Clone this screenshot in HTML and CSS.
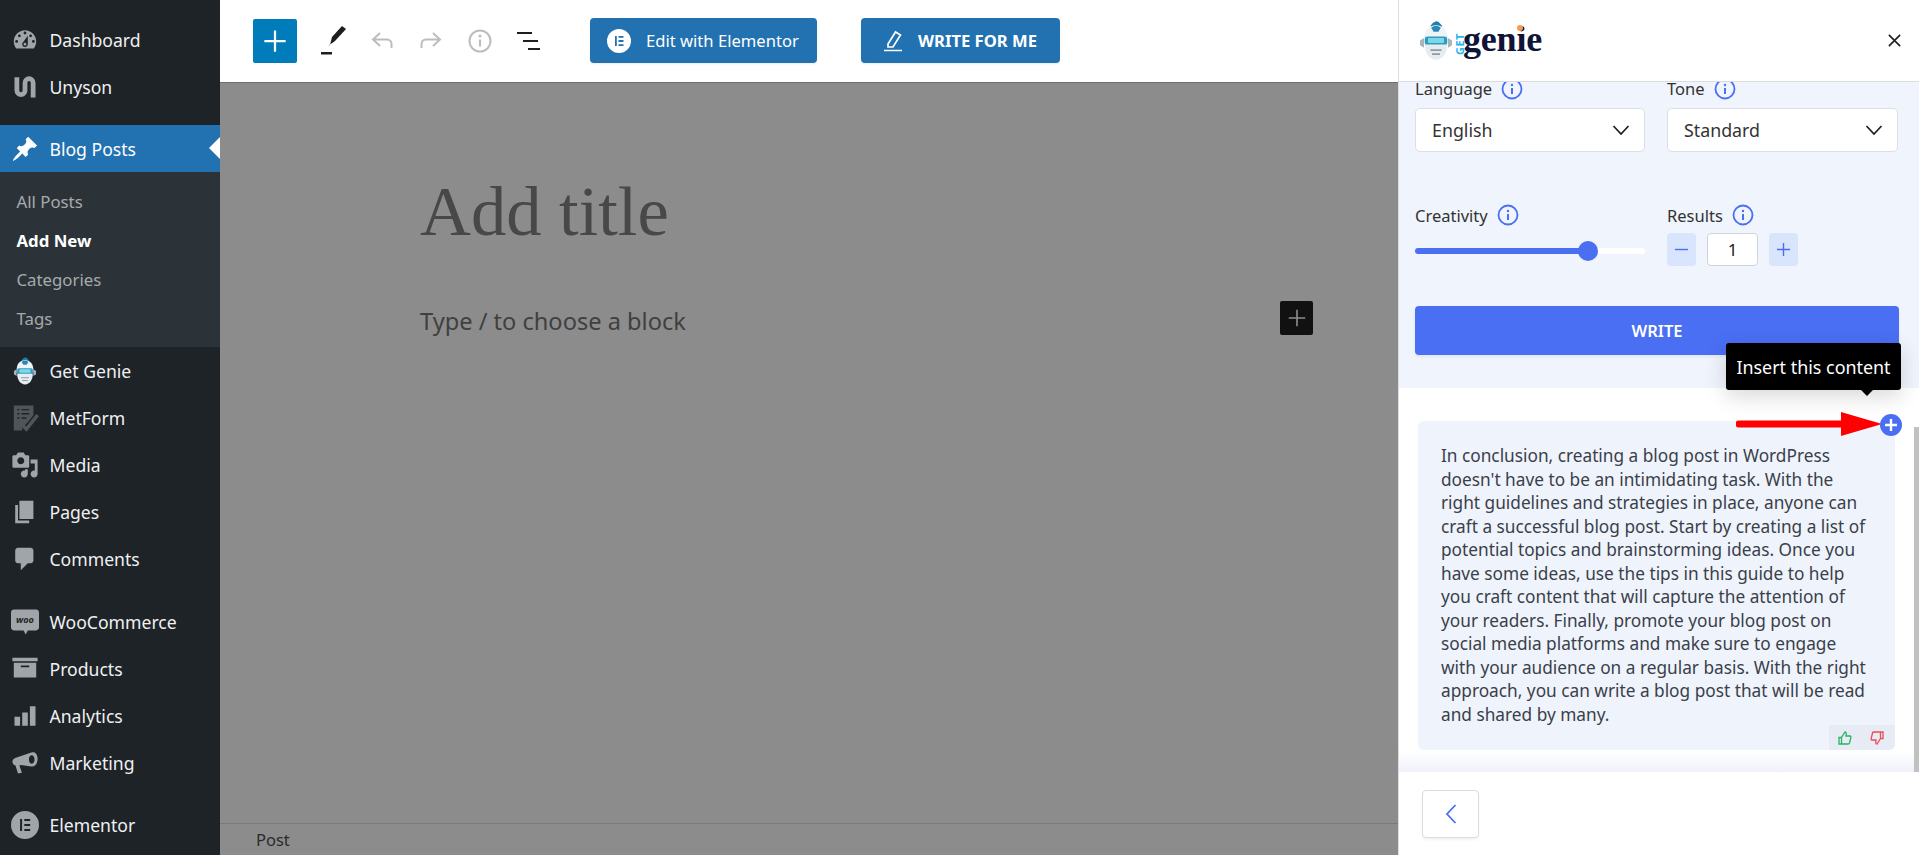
FILE: index.html
```html
<!DOCTYPE html>
<html lang="en">
<head>
<meta charset="utf-8">
<title>Add New Post</title>
<link rel="stylesheet" href="styles.css">
</head>
<body>
<svg class="defs" width="0" height="0" aria-hidden="true">
  <defs>
    <symbol id="robot" viewBox="0 0 40 50">
      <path d="M20 1l3 .5 5 5.500-3 3H15l-2-3 3-4z" fill="#1d7fb0"/>
      <path d="M5 24C5 12 11 6 20 6s15 6 15 18v4H5z" fill="#eef3f6"/>
      <path d="M14 9c3-3 9-3 12 0l-3 5h-6z" fill="#2a88b8"/>
      <path d="M0 25l5-3v12l-5-3z M40 25l-5-3v12l5-3z" fill="#a9b4bc"/>
      <rect x="6" y="20" width="28" height="11" rx="3" fill="#2f9dbf"/>
      <rect x="10" y="22" width="20" height="6" rx="1" fill="#7fd6e6"/>
      <path d="M6 30h28c0 11-6 19-14 19S6 41 6 30z" fill="#e6ecef"/>
      <path d="M13 37h14M15 42h10" stroke="#8e9ca6" stroke-width="2" fill="none"/>
    </symbol>
  </defs>
</svg>
<div class="app">
  <nav class="sidebar">
    <div class="group">
      <a class="item"><svg class="ico" viewBox="0 0 20 20"><path d="M3.76 16h12.48c1.1-1.37 1.76-3.11 1.76-5 0-4.42-3.58-8-8-8s-8 3.58-8 8c0 1.89.66 3.63 1.76 5zM10 4c.55 0 1 .45 1 1s-.45 1-1 1-1-.45-1-1 .45-1 1-1zM6 6c.55 0 1 .45 1 1s-.45 1-1 1-1-.45-1-1 .45-1 1-1zm8 0c.55 0 1 .45 1 1s-.45 1-1 1-1-.45-1-1 .45-1 1-1zm-5.37 5.55L12 7v6c0 1.1-.9 2-2 2s-2-.9-2-2c0-.57.24-1.08.63-1.45zM4 10c.55 0 1 .45 1 1s-.45 1-1 1-1-.45-1-1 .45-1 1-1zm12 0c.55 0 1 .45 1 1s-.45 1-1 1-1-.45-1-1 .45-1 1-1zm-5 3c0-.55-.45-1-1-1s-1 .45-1 1 .45 1 1 1 1-.45 1-1z" fill-rule="evenodd"/></svg>Dashboard</a>
      <a class="item"><svg class="ico" viewBox="0 0 20 20"><path d="M4.200 3v9.500a2.900 2.900 0 0 0 5.800 0V7a2.900 2.900 0 0 1 5.800 0v10.500" fill="none" stroke="#a0a5aa" stroke-width="3.400"/></svg>Unyson</a>
    </div>
    <div class="group">
      <a class="item active"><svg class="ico" viewBox="0 0 20 20"><path d="M10.44 3.02l1.82-1.82 6.36 6.35-1.83 1.82c-1.05-.68-2.48-.57-3.41.36l-.75.75c-.92.93-1.04 2.35-.35 3.41l-1.83 1.82-2.41-2.41-2.8 2.79c-.42.42-3.38 2.71-3.8 2.29s1.86-3.39 2.28-3.81l2.79-2.79L4.1 9.36l1.83-1.82c1.05.69 2.48.57 3.4-.36l.75-.75c.93-.92 1.05-2.35.36-3.41z"/></svg>Blog Posts</a>
      <div class="submenu">
        <a class="sub">All Posts</a>
        <a class="sub current">Add New</a>
        <a class="sub">Categories</a>
        <a class="sub">Tags</a>
      </div>
      <a class="item"><svg class="ico" viewBox="0 0 40 50"><use href="#robot"/></svg>Get Genie</a>
      <a class="item"><svg class="ico" viewBox="0 0 20 20"><path d="M2 1h14v7l-4 5-3 3-1 .5V19H2z" fill="#50555a"/><path d="M8 15l3 3 8-10" fill="none" stroke="#50555a" stroke-width="2.500"/><path d="M4.500 4h1.500M7.500 4H13M4.500 7h1.500M7.500 7H13M4.500 10h1.500M7.500 10H11" stroke="#1d2327" stroke-width="1"/></svg>MetForm</a>
      <a class="item"><svg class="ico" viewBox="0 0 20 20"><path d="M13 11V4c0-.55-.45-1-1-1h-1.670L9 1H5L3.670 3H2c-.55 0-1 .45-1 1v7c0 .55.45 1 1 1h10c.55 0 1-.45 1-1zM7 4.500c1.380 0 2.500 1.120 2.500 2.500S8.380 9.500 7 9.500 4.500 8.380 4.500 7 5.620 4.500 7 4.500zM14 6h5v10.500c0 1.380-1.120 2.500-2.500 2.500S14 17.880 14 16.500s1.120-2.500 2.500-2.500c.170 0 .340.020.500.050V9h-3V6zm-4 8.050V13h2v3.500c0 1.380-1.120 2.500-2.500 2.500S7 17.880 7 16.500 8.120 14 9.500 14c.170 0 .340.020.500.050z" fill-rule="evenodd"/></svg>Media</a>
      <a class="item"><svg class="ico" viewBox="0 0 20 20"><path d="M6 15V2h10v13H6zm-1 1h8v2H3V5h2v11z"/></svg>Pages</a>
      <a class="item"><svg class="ico" viewBox="0 0 20 20"><path d="M5 2h9c1.100 0 2 .9 2 2v7c0 1.100-.9 2-2 2h-2l-5 5v-5H5c-1.100 0-2-.9-2-2V4c0-1.100.9-2 2-2z"/></svg>Comments</a>
    </div>
    <div class="group wide">
      <a class="item"><svg class="ico" viewBox="0 0 20 20"><path d="M2 1h16c1 0 2 1 2 2v11c0 1-1 2-2 2h-6l-1.500 3-1.500-3H2c-1 0-2-1-2-2V3c0-1 1-2 2-2z"/><text class="woo" x="10" y="11" text-anchor="middle">woo</text></svg>WooCommerce</a>
      <a class="item"><svg class="ico" viewBox="0 0 20 20"><path d="M19 2v2.500H1V2zM2 5.500h16V16H2zM7 7.500v1.200h6V7.500z" fill-rule="evenodd"/></svg>Products</a>
      <a class="item"><svg class="ico" viewBox="0 0 20 20"><path d="M2.500 10.500h4V17h-4zM8 7.500h4V17H8zM13.500 3h4v14h-4z"/></svg>Analytics</a>
      <a class="item"><svg class="ico" viewBox="0 0 20 20"><path d="M14.500 2.500C17 1.500 19 3.500 19 7s-2 6-4.500 5.500L7 11.500l-1 .2L7.800 17 5 17.500 3.200 11.800C1.500 11.500 1 9.800 1 9c0-1 .8-2 2-2.500zM14.800 4.500c-1.200 0-2 1.300-2 3s.8 3 2 3 2-1.300 2-3-.8-3-2-3z" fill-rule="evenodd"/></svg>Marketing</a>
    </div>
    <div class="group">
      <a class="item"><svg class="ico" viewBox="0 0 20 20"><path d="M10 0a10 10 0 1 0 0 20 10 10 0 0 0 0-20zM6.500 5.800h1.400v8.400H6.500zM9.500 5.800h4.200v1.400H9.500zM9.500 9.300h4.200v1.400H9.500zM9.500 12.800h4.200v1.400H9.500z" fill-rule="evenodd"/></svg>Elementor</a>
    </div>
  </nav>

  <main class="editor">
    <header class="toolbar">
      <button class="inserter"><svg viewBox="0 0 24 24" class="tb-plus"><path d="M12 3.500v17M3.500 12h17" stroke="#fff" stroke-width="1.800" fill="none"/></svg></button>
      <span class="tool first"><svg viewBox="0 0 28 34" class="tb-ico"><path d="M11 21l2-8L23 2l4 3-11 12-7 5z" fill="#1e1e1e"/><rect x="2" y="28" width="11" height="2.500" fill="#1e1e1e"/></svg></span>
      <span class="tool"><svg viewBox="0 0 28 28" class="tb-ico"><path d="M12 6l-7 6.500 7 6.500M5.500 12.500H19a4.500 4.500 0 0 1 4.500 4.500v4" fill="none" stroke="#bdbdbd" stroke-width="2"/></svg></span>
      <span class="tool"><svg viewBox="0 0 28 28" class="tb-ico"><path d="M16 6l7 6.500-7 6.500M22.500 12.500H9A4.500 4.500 0 0 0 4.500 17v4" fill="none" stroke="#bdbdbd" stroke-width="2"/></svg></span>
      <span class="tool"><svg viewBox="0 0 28 28" class="tb-ico"><circle cx="14" cy="14" r="10.500" fill="none" stroke="#bdbdbd" stroke-width="2"/><path d="M14 12.500v7" stroke="#bdbdbd" stroke-width="2.200"/><circle cx="14" cy="9" r="1.500" fill="#bdbdbd"/></svg></span>
      <span class="tool"><svg viewBox="0 0 28 28" class="tb-ico"><path d="M2 6h15M8 14h15M13 22h12" stroke="#1e1e1e" stroke-width="2.200" fill="none"/></svg></span>
      <button class="wpbtn elementor"><svg viewBox="0 0 24 24" class="btn-ico"><path d="M12 0a12 12 0 1 0 0 24 12 12 0 0 0 0-24zM8 7h1.800v10H8zM11.500 7H16.500v1.800h-5zM11.500 11.100H16.500v1.800h-5zM11.500 15.200H16.500V17h-5z" fill="#fff" fill-rule="evenodd"/></svg>Edit with Elementor</button>
      <button class="wpbtn writeme"><svg viewBox="0 0 24 24" class="btn-ico"><path d="M7 15L14.500 3l5 3-7.500 12H7zM3 21.500h18" fill="none" stroke="#fff" stroke-width="1.700"/></svg>WRITE FOR ME</button>
    </header>
    <section class="canvas">
      <h1 class="post-title">Add title</h1>
      <div class="block-row">
        <p class="block-hint">Type / to choose a block</p>
        <button class="block-add"><svg viewBox="0 0 24 24"><path d="M12 3v18M3 12h18" stroke="#8c8c8c" stroke-width="1.800" fill="none"/></svg></button>
      </div>
    </section>
    <footer class="status">Post</footer>
  </main>

  <aside class="panel">
    <header class="panel-head">
      <div class="logo">
        <svg class="logo-robot"><use href="#robot"/></svg>
        <span class="logo-word">genie</span>
        <span class="logo-get">GET</span>
        <span class="logo-dot"></span>
      </div>
      <svg class="close" viewBox="0 0 16 16"><path d="M2 2l12 12M14 2L2 14" stroke="#1e1e1e" stroke-width="1.700" fill="none"/></svg>
    </header>
    <div class="form">
      <div class="fields top">
        <div class="field">
          <label class="label">Language<svg class="info" viewBox="0 0 22 22"><circle cx="11" cy="11" r="9.500" fill="none" stroke="#4a6ff3" stroke-width="1.800"/><path d="M11 10v6" stroke="#4a6ff3" stroke-width="2"/><circle cx="11" cy="7" r="1.200" fill="#4a6ff3"/></svg></label>
          <div class="select">English<svg class="chev" viewBox="0 0 18 12"><path d="M1.500 2L9 10l7.500-8" fill="none" stroke="#1e1e1e" stroke-width="1.700"/></svg></div>
        </div>
        <div class="field">
          <label class="label">Tone<svg class="info" viewBox="0 0 22 22"><circle cx="11" cy="11" r="9.500" fill="none" stroke="#4a6ff3" stroke-width="1.800"/><path d="M11 10v6" stroke="#4a6ff3" stroke-width="2"/><circle cx="11" cy="7" r="1.200" fill="#4a6ff3"/></svg></label>
          <div class="select">Standard<svg class="chev" viewBox="0 0 18 12"><path d="M1.500 2L9 10l7.500-8" fill="none" stroke="#1e1e1e" stroke-width="1.700"/></svg></div>
        </div>
      </div>
      <div class="fields second">
        <div class="field">
          <label class="label">Creativity<svg class="info" viewBox="0 0 22 22"><circle cx="11" cy="11" r="9.500" fill="none" stroke="#4a6ff3" stroke-width="1.800"/><path d="M11 10v6" stroke="#4a6ff3" stroke-width="2"/><circle cx="11" cy="7" r="1.200" fill="#4a6ff3"/></svg></label>
          <div class="slider"><div class="slider-fill"></div><div class="slider-thumb"></div></div>
        </div>
        <div class="field">
          <label class="label">Results<svg class="info" viewBox="0 0 22 22"><circle cx="11" cy="11" r="9.500" fill="none" stroke="#4a6ff3" stroke-width="1.800"/><path d="M11 10v6" stroke="#4a6ff3" stroke-width="2"/><circle cx="11" cy="7" r="1.200" fill="#4a6ff3"/></svg></label>
          <div class="stepper">
            <button class="step"><svg viewBox="0 0 16 16"><path d="M1 8h14" stroke="#4a6ff3" stroke-width="1.500"/></svg></button>
            <span class="count">1</span>
            <button class="step"><svg viewBox="0 0 16 16"><path d="M1 8h14M8 1v14" stroke="#4a6ff3" stroke-width="1.500"/></svg></button>
          </div>
        </div>
      </div>
      <button class="write">WRITE</button>
    </div>
    <div class="results">
      <div class="tooltip">Insert this content</div>
      <svg class="red-arrow" viewBox="0 0 146 24"><path d="M3 12H110" stroke="#f00" stroke-width="7" stroke-linecap="round"/><path d="M105 0l41 12-41 12z" fill="#f00"/></svg>
      <span class="insert"><svg viewBox="0 0 22 22"><path d="M11 5v12M5 11h12" stroke="#fff" stroke-width="2.400"/></svg></span>
      <article class="card">
        <p class="card-text">In conclusion, creating a blog post in WordPress<br>doesn't have to be an intimidating task. With the<br>right guidelines and strategies in place, anyone can<br>craft a successful blog post. Start by creating a list of<br>potential topics and brainstorming ideas. Once you<br>have some ideas, use the tips in this guide to help<br>you craft content that will capture the attention of<br>your readers. Finally, promote your blog post on<br>social media platforms and make sure to engage<br>with your audience on a regular basis. With the right<br>approach, you can write a blog post that will be read<br>and shared by many.</p>
        <div class="rating">
          <svg viewBox="0 0 14 14"><path d="M1 6.500h2.500V13H1zM3.500 6.500L7 1c1.500 0 1.500 1.500 1 4h4c1 0 1 1 .8 1.500L11.500 12c-.2.7-.7 1-1.500 1H3.500" fill="none" stroke="#22b566" stroke-width="1.300"/></svg>
          <svg viewBox="0 0 14 14"><path d="M13 7.500h-2.500V1H13zM10.500 7.500L7 13c-1.500 0-1.500-1.500-1-4H2c-1 0-1-1-.8-1.500L2.500 2c.2-.7.7-1 1.500-1h6.500" fill="none" stroke="#ee4b5b" stroke-width="1.300"/></svg>
        </div>
      </article>
      <div class="fade"></div>
      <div class="scroll-thumb"></div>
    </div>
    <footer class="panel-foot">
      <button class="back"><svg viewBox="0 0 12 20"><path d="M10.500 1L2 10l8.500 9" fill="none" stroke="#4a6ff3" stroke-width="1.800"/></svg></button>
    </footer>
  </aside>
</div>
</body>
</html>
```

FILE: styles.css
```css
* { box-sizing: border-box; }
html, body { margin: 0; height: 100%; overflow: hidden; }
body { font-family: "Noto Sans", "Open Sans", sans-serif; color: #1e1e1e; background: #fff; }
button { border: 0; padding: 0; font: inherit; }
.defs { position: absolute; }

.app { display: grid; grid-template-columns: 220px 1178px 521px; grid-template-rows: 855px; height: 855px; overflow: hidden; }

/* sidebar */
.sidebar { background: #1d2327; padding-top: 16px; display: flex; flex-direction: column; overflow: hidden; }
.group { display: flex; flex-direction: column; margin-bottom: 15px; flex: none; }
.group.wide { margin-top: 1px; }
.item { position: relative; height: 47px; display: flex; align-items: center; color: #f0f0f1; font-size: 17.600px; padding-left: 49.500px; flex: none; }
.ico { position: absolute; left: 11px; top: 9.500px; width: 28px; height: 28px; fill: #a0a5aa; }
.item.active { background: #2271b1; color: #fff; }
.item.active .ico { fill: #fff; }
.item.active::after { content: ""; position: absolute; right: 0; top: 12px; border: 11px solid transparent; border-left-width: 0; border-right-color: #fff; }
.woo { font: italic 700 6.500px "Noto Sans", sans-serif; fill: #1d2327; }
.submenu { background: #2c3338; padding: 10px 0 9px; display: flex; flex-direction: column; flex: none; }
.sub { height: 39px; display: flex; align-items: center; padding-left: 16.500px; font-size: 16.800px; color: #a7aaad; }
.sub.current { color: #fff; font-weight: 700; }

/* editor */
.editor { display: flex; flex-direction: column; background: #8c8c8c; min-width: 0; }
.toolbar { height: 83px; background: #fff; border-bottom: 1px solid #6e6e6e; display: flex; align-items: center; padding-left: 33px; flex: none; padding-bottom: 1px; }
.inserter { width: 44px; height: 44px; background: #007cba; border-radius: 2px; display: flex; align-items: center; justify-content: center; }
.tb-plus { width: 30px; height: 30px; }
.tool { width: 49px; display: flex; justify-content: center; }
.tool.first { margin-left: 11px; }
.tb-ico { width: 28px; height: 28px; display: block; }
.tool.first .tb-ico { height: 34px; }
.wpbtn { height: 45px; background: #2271b1; color: #fff; border-radius: 4px; display: flex; align-items: center; font-size: 16.600px; box-shadow: 0 1px 2px rgba(0,0,0,.08); }
.btn-ico { width: 24px; height: 24px; }
.elementor { width: 227px; margin-left: 37px; padding-left: 17px; gap: 15px; }
.writeme { width: 199px; margin-left: 44px; padding-left: 20px; gap: 13px; font-weight: 700; }

.canvas { flex: 1; padding-left: 200px; }
.post-title { margin: 84px 0 0; font: 400 70.500px/88px "Liberation Serif", serif; color: #484848; }
.block-row { width: 893px; margin-top: 46px; display: flex; align-items: center; justify-content: space-between; height: 34px; }
.block-hint { margin: 6px 0 0; font-size: 23.600px; color: #404040; }
.block-add { width: 33px; height: 34px; background: #111; border-radius: 2px; display: flex; align-items: center; justify-content: center; }
.block-add svg { width: 22px; height: 22px; }
.status { height: 32px; border-top: 1px solid #7a7a7a; padding-left: 36px; font-size: 16.500px; color: #2b2b2b; display: flex; align-items: center; flex: none; }

/* panel */
.panel { display: flex; flex-direction: column; background: #fff; border-left: 1px solid #ddd; height: 855px; position: relative; }
.panel-head { height: 82px; flex: none; background: #fff; border-bottom: 1px solid #dcdcdc; display: flex; align-items: center; justify-content: space-between; padding: 0 17px 0 21px; position: relative; z-index: 2; }
.logo { position: relative; display: flex; align-items: center; height: 50px; width: 122px; }
.logo-robot { width: 32px; height: 41px; display: block; }
.logo-get { position: absolute; left: 27px; top: 20px; width: 26px; font: 700 11px/12px "Noto Sans", sans-serif; color: #23b5f2; transform: rotate(-90deg); letter-spacing: .5px; }
.logo-word { position: absolute; left: 43px; top: 1px; font: 700 36px/44px "Liberation Serif", serif; color: #0f1437; letter-spacing: -.2px; }
.logo-dot { position: absolute; left: 97px; top: 9px; width: 6px; height: 6px; border-radius: 50%; background: #f99b4a; }
.close { width: 15px; height: 15px; }

.form { height: 306px; flex: none; background: #f0f4fc; padding: 0 21px 0 16px; overflow: hidden; }
.fields { display: grid; grid-template-columns: 230px 231px; column-gap: 22px; }
.fields.second { margin-top: 52px; }
.field { min-width: 0; }
.label { display: flex; align-items: center; gap: 9px; height: 22px; font-size: 16.500px; color: #333; }
.top .label { height: 14px; line-height: 14px; }
.info { width: 22px; height: 22px; flex: none; }
.select { height: 44px; margin-top: 8px; background: #fff; border: 1px solid #dcdfe6; border-radius: 5px; display: flex; align-items: center; justify-content: space-between; padding: 0 14px 0 16px; font-size: 17.800px; color: #333; }
.top .select { margin-top: 12px; }
.chev { width: 18px; height: 12px; }
.slider { position: relative; height: 6px; margin-top: 22px; background: #fff; border-radius: 3px; }
.slider-fill { width: 173px; height: 6px; background: #4a6ff3; border-radius: 3px; }
.slider-thumb { position: absolute; left: 163px; top: -7px; width: 20px; height: 20px; background: #4a6ff3; border-radius: 50%; }
.stepper { margin-top: 7px; display: flex; align-items: center; gap: 11px; }
.step { width: 29px; height: 33px; background: #d9e5fd; border-radius: 4px; display: flex; align-items: center; justify-content: center; }
.step svg { width: 15px; height: 15px; }
.count { width: 51px; height: 33px; background: #fff; border: 1px solid #cfd3da; border-radius: 4px; display: flex; align-items: center; justify-content: center; font-size: 17px; color: #222; }
.write { display: block; width: 484px; height: 49px; margin-top: 40px; background: #4a6ff3; color: #fff; border-radius: 4px; font-size: 16.500px; font-weight: 600; box-shadow: 0 2px 3px rgba(0,0,0,.06); }

.results { flex: 1; position: relative; background: #fff; padding: 33px 0 0 19px; min-height: 0; }
.card { width: 477px; height: 329px; background: #eff3fb; border-radius: 6px; padding: 23px 0 0 23px; position: relative; }
.card-text { margin: 0; font-size: 17.250px; line-height: 23.500px; color: #3a3f4a; white-space: nowrap; }
.rating { position: absolute; right: 0; bottom: 0; width: 66px; height: 25px; background: #e7ebf4; border-radius: 0 0 6px 0; display: flex; align-items: center; justify-content: center; gap: 18px; padding-right: 2px; }
.rating svg { width: 14px; height: 14px; }
.tooltip { position: absolute; left: 327px; top: -45px; z-index: 3; width: 175px; height: 47px; background: #000; color: #fff; border-radius: 3px; display: flex; align-items: center; justify-content: center; font-size: 17.900px; box-shadow: 0 6px 22px rgba(0,0,0,.16); }
.tooltip::after { content: ""; position: absolute; left: 134px; bottom: -5px; width: 14px; height: 14px; background: #000; transform: rotate(45deg) scale(.8); }
.red-arrow { position: absolute; left: 337px; top: 24px; width: 146px; height: 24px; z-index: 2; }
.insert { position: absolute; left: 481px; top: 26px; z-index: 2; width: 22px; height: 22px; background: #4a6ff3; border-radius: 50%; }
.insert svg { display: block; width: 22px; height: 22px; }
.fade { position: absolute; left: 0; right: 5px; bottom: 0; height: 22px; background: linear-gradient(rgba(240,242,251,0), #f0f2fb); }
.scroll-thumb { position: absolute; right: 0; bottom: 0; width: 5px; height: 345px; background: #c1c1c1; }

.panel-foot { height: 83px; flex: none; background: #fff; padding: 18px 0 0 23px; }
.back { width: 57px; height: 48px; background: #fff; border: 1px solid #dcdcdc; border-radius: 4px; display: flex; align-items: center; justify-content: center; box-shadow: 0 2px 3px rgba(0,0,0,.05); }
.back svg { width: 12px; height: 20px; }
```
